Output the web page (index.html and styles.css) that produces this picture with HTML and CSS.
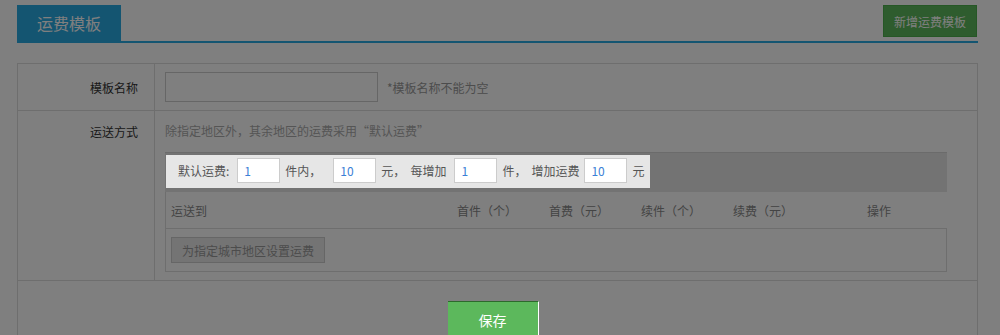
FILE: index.html
```html
<!DOCTYPE html>
<html lang="zh-CN">
<head>
  <meta charset="UTF-8">
  <title>运费模板</title>
  <link rel="stylesheet" href="styles.css">
</head>
<body>
  <div class="page">
    <div class="page-head">
      <div class="tab-title">运费模板</div>
      <button class="btn-add">新增运费模板</button>
    </div>

    <div class="form-box">
      <div class="form-row">
        <div class="form-label">模板名称</div>
        <div class="form-cell name-cell">
          <input type="text" class="name-input">
          <span class="hint">*模板名称不能为空</span>
        </div>
      </div>

      <div class="form-row">
        <div class="form-label label-top">运送方式</div>
        <div class="form-cell">
          <p class="tip">除指定地区外，其余地区的运费采用“默认运费”</p>
          <div class="fee-bar">
            <div class="fee-set">
              <span>默认运费:</span>
              <input type="text" class="fee-input first" value="1">
              <span class="wide">件内，</span>
              <input type="text" class="fee-input" value="10">
              <span>元，</span>
              <span>每增加</span>
              <input type="text" class="fee-input first" value="1">
              <span>件，</span>
              <span>增加运费</span>
              <input type="text" class="fee-input" value="10">
              <span>元</span>
            </div>
          </div>
          <div class="area-table">
            <div class="area-head">
              <span class="col-to">运送到</span>
              <span class="col-num">首件（个）</span>
              <span class="col-num">首费（元）</span>
              <span class="col-num">续件（个）</span>
              <span class="col-num">续费（元）</span>
              <span class="col-op">操作</span>
            </div>
            <div class="area-body">
              <button class="btn-area">为指定城市地区设置运费</button>
            </div>
          </div>
        </div>
      </div>

      <div class="form-foot">
        <button class="btn-save">保存</button>
      </div>
    </div>
  </div>

  <!-- guide mask -->
  <div class="mask"></div>
</body>
</html>
```

FILE: styles.css
```css
body {
  margin: 0;
  font-family: "Noto Sans CJK SC", "DejaVu Sans", sans-serif;
  font-size: 12px;
  color: #333;
  background: #fff;
}

.page {
  width: 961px;
  margin-left: 17px;
  padding-top: 5px;
}

.page-head {
  display: flex;
  justify-content: space-between;
  align-items: flex-start;
  border-bottom: 2px solid #28aae2;
}

.tab-title {
  height: 36px;
  line-height: 36px;
  padding: 0 20px;
  background: #28aae2;
  color: #fff;
  font-size: 16px;
}

.btn-add {
  height: 32px;
  padding: 0 10px;
  margin-right: 1px;
  background: #5cb85c;
  border: 1px solid #4cae4c;
  color: #fff;
  font-family: inherit;
  font-size: 12px;
}

.form-box {
  margin-top: 20px;
  border: 1px solid #ddd;
}

.form-row {
  display: flex;
  border-bottom: 1px solid #ddd;
}

.form-label {
  width: 120px;
  padding-right: 16px;
  text-align: right;
  border-right: 1px solid #ddd;
  display: flex;
  align-items: center;
  justify-content: flex-end;
  color: #333;
}

.label-top {
  align-items: flex-start;
  padding-top: 11px;
  line-height: 20px;
}

.form-cell {
  flex: 1;
  padding: 0 30px 8px 10px;
}

.name-cell {
  display: flex;
  align-items: center;
  padding: 8px 10px;
}

.name-input {
  width: 211px;
  height: 28px;
  padding: 0;
  border: 1px solid #ccc;
  margin: 0 9px 0 0;
}

.hint {
  color: #999;
}

.tip {
  margin: 10px 0 11px;
  line-height: 20px;
  color: #aaa;
}

.fee-bar {
  background: #e6e6e6;
  border-top: 1px solid #d6d6d6;
  padding: 2px 0 4px 1px;
}

.fee-set {
  position: relative;
  z-index: 11;
  display: inline-flex;
  align-items: center;
  gap: 5px;
  padding: 3px 6px 5px 12px;
  background: #e6e6e6;
  color: #555;
}

.fee-input {
  width: 35px;
  height: 23px;
  padding: 0 0 0 6px;
  border: 1px solid #ccc;
  margin: 0;
  color: #3b7fd6;
  font-family: inherit;
  font-size: 12px;
}

.fee-input.first {
  margin-left: 3px;
}

.wide {
  margin-right: 7px;
}

.area-table {
  border-left: 1px solid #ddd;
}

.area-head {
  display: flex;
  height: 36px;
  align-items: center;
  color: #888;
}

.col-to {
  width: 286px;
  padding-left: 5px;
}

.col-num {
  width: 92px;
}

.col-op {
  padding-left: 42px;
}

.area-body {
  border: 1px solid #ddd;
  border-left: none;
  padding: 8px 5px;
}

.btn-area {
  height: 26px;
  padding: 0 10px;
  background: #e8e8e8;
  border: 1px solid #ccc;
  color: #999;
  font-family: inherit;
  font-size: 12px;
}

.form-foot {
  padding: 20px 9px 10px 0;
  text-align: center;
}

.btn-save {
  position: relative;
  z-index: 11;
  width: 91px;
  height: 36px;
  background: #5cb85c;
  border: none;
  border-top: 1px solid #2c6a2c;
  border-right: 1px solid #fff;
  color: #fff;
  font-family: inherit;
  font-size: 14px;
}

.mask {
  position: fixed;
  top: 0;
  left: 0;
  right: 0;
  bottom: 0;
  background: rgba(0, 0, 0, 0.5);
  z-index: 10;
}
```
